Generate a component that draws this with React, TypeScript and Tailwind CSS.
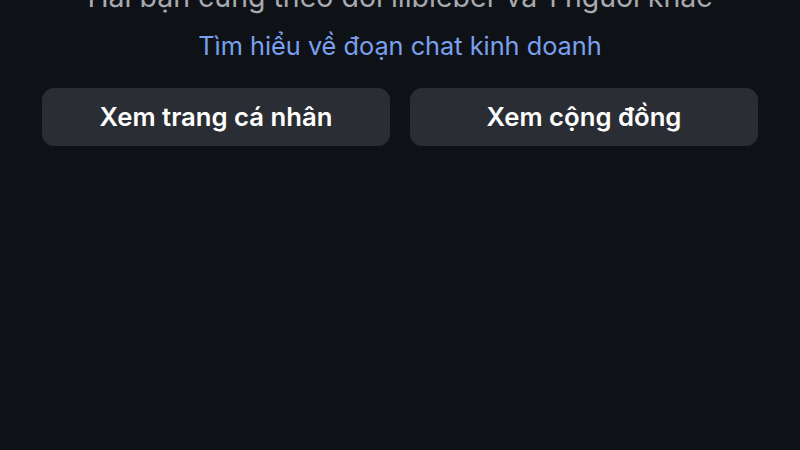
export default function App() {
  return (
    <div
      className="w-[800px] h-[450px] bg-[#0e1217] overflow-hidden flex flex-col items-center"
      style={{ fontFamily: "Inter, 'Noto Sans', sans-serif" }}
    >
      <div className="mt-[-20px] h-[34px] leading-[34px] text-[28.5px] text-[#a7aaaf] whitespace-nowrap">
        Hai bạn cùng theo dõi lilbieber và 1 người khác
      </div>
      <div className="mt-[15px] h-[34px] leading-[34px] text-[25.3px] text-[#7aa0ee] whitespace-nowrap">
        Tìm hiểu về đoạn chat kinh doanh
      </div>
      <div className="mt-[25px] w-full px-[42px] grid grid-cols-2 gap-[20px]">
        <button className="h-[58px] rounded-[12px] bg-[#2a2e34] text-white text-[25.7px] font-semibold">
          Xem trang cá nhân
        </button>
        <button className="h-[58px] rounded-[12px] bg-[#2a2e34] text-white text-[25.7px] font-semibold">
          Xem cộng đồng
        </button>
      </div>
    </div>
  );
}
